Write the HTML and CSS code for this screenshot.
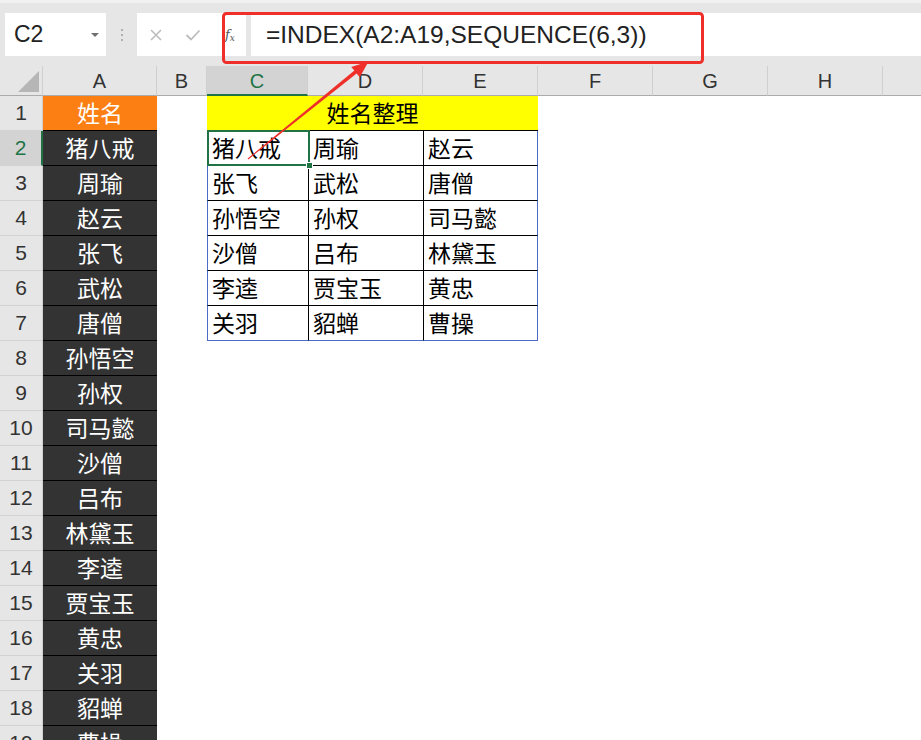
FILE: index.html
```html
<!DOCTYPE html>
<html lang="zh-CN">
<head>
<meta charset="utf-8">
<title>INDEX SEQUENCE</title>
<link rel="stylesheet" href="styles.css">
</head>
<body>
<div class="app">
  <div class="toolbar">
    <div class="namebox"><span class="ref">C2</span><span class="caret"></span></div>
    <div class="dots"><i></i><i></i><i></i></div>
    <div class="fxbox">
      <svg class="ico" width="14" height="14" viewBox="0 0 14 14"><path d="M2 2 L12 12 M12 2 L2 12" stroke="#bdbdbd" stroke-width="1.6" fill="none"/></svg>
      <svg class="ico" width="16" height="14" viewBox="0 0 16 14"><path d="M1.5 7 L6 11.5 L14.5 2.5" stroke="#bdbdbd" stroke-width="1.8" fill="none"/></svg>
      <span class="fx">f<sub>x</sub></span>
    </div>
    <div class="formula">=INDEX(A2:A19,SEQUENCE(6,3))</div>
  </div>

  <div class="sheet">
    <div class="colhead">
      <div class="corner"><span class="tri"></span></div>
      <div class="ch">A</div>
      <div class="ch">B</div>
      <div class="ch sel">C</div>
      <div class="ch">D</div>
      <div class="ch">E</div>
      <div class="ch">F</div>
      <div class="ch">G</div>
      <div class="ch">H</div>
      <div class="ch last"></div>
    </div>

    <div class="row">
      <div class="rh">1</div><div class="a head">姓名</div><div class="b"></div>
      <div class="title">姓名整理</div>
    </div>
    <div class="row">
      <div class="rh sel">2</div><div class="a">猪八戒</div><div class="b"></div>
      <div class="d c1 active">猪八戒</div><div class="d c2">周瑜</div><div class="d c3">赵云</div>
    </div>
    <div class="row">
      <div class="rh">3</div><div class="a">周瑜</div><div class="b"></div>
      <div class="d c1">张飞</div><div class="d c2">武松</div><div class="d c3">唐僧</div>
    </div>
    <div class="row">
      <div class="rh">4</div><div class="a">赵云</div><div class="b"></div>
      <div class="d c1">孙悟空</div><div class="d c2">孙权</div><div class="d c3">司马懿</div>
    </div>
    <div class="row">
      <div class="rh">5</div><div class="a">张飞</div><div class="b"></div>
      <div class="d c1">沙僧</div><div class="d c2">吕布</div><div class="d c3">林黛玉</div>
    </div>
    <div class="row">
      <div class="rh">6</div><div class="a">武松</div><div class="b"></div>
      <div class="d c1">李逵</div><div class="d c2">贾宝玉</div><div class="d c3">黄忠</div>
    </div>
    <div class="row">
      <div class="rh">7</div><div class="a">唐僧</div><div class="b"></div>
      <div class="d c1 lastrow">关羽</div><div class="d c2 lastrow">貂蝉</div><div class="d c3 lastrow">曹操</div>
    </div>
    <div class="row"><div class="rh">8</div><div class="a">孙悟空</div></div>
    <div class="row"><div class="rh">9</div><div class="a">孙权</div></div>
    <div class="row"><div class="rh">10</div><div class="a">司马懿</div></div>
    <div class="row"><div class="rh">11</div><div class="a">沙僧</div></div>
    <div class="row"><div class="rh">12</div><div class="a">吕布</div></div>
    <div class="row"><div class="rh">13</div><div class="a">林黛玉</div></div>
    <div class="row"><div class="rh">14</div><div class="a">李逵</div></div>
    <div class="row"><div class="rh">15</div><div class="a">贾宝玉</div></div>
    <div class="row"><div class="rh">16</div><div class="a">黄忠</div></div>
    <div class="row"><div class="rh">17</div><div class="a">关羽</div></div>
    <div class="row"><div class="rh">18</div><div class="a">貂蝉</div></div>
    <div class="row"><div class="rh">19</div><div class="a">曹操</div></div>
  </div>

  <svg class="annot" width="921" height="740" viewBox="0 0 921 740">
    <rect x="223.5" y="13.5" width="479" height="49" rx="3" ry="3" fill="none" stroke="#ee2f2a" stroke-width="3"/>
    <polygon fill="#ee2f2a" points="247.6,158.6 354.4,70.6 351.2,67.0 368.5,61.5 359.8,77.2 356.6,73.4 248.3,159.4"/>
  </svg>
</div>
</body>
</html>
```

FILE: styles.css
```css
html, body {
  margin: 0;
  padding: 0;
  width: 921px;
  height: 740px;
  overflow: hidden;
  background: #ffffff;
}

.app {
  position: relative;
  width: 921px;
  height: 740px;
  overflow: hidden;
  font-family: "Liberation Sans", Arial, "Noto Sans CJK SC", sans-serif;
  color: #222;
}

/* ---------- formula bar ---------- */
.toolbar {
  height: 66px;
  box-sizing: border-box;
  background: #e6e6e6;
  border-top: 3px solid #f1f1f1;
  padding-top: 10px;
  display: flex;
  align-items: flex-start;
}

.namebox {
  margin-left: 5px;
  width: 101px;
  height: 43px;
  box-sizing: border-box;
  background: #fff;
  display: flex;
  align-items: center;
  justify-content: space-between;
  padding: 0 7px 0 9px;
}

.ref {
  font-size: 23px;
  color: #222;
}

.caret {
  width: 0;
  height: 0;
  border-left: 4px solid transparent;
  border-right: 4px solid transparent;
  border-top: 4px solid #707070;
}

.dots {
  width: 31px;
  height: 43px;
  display: flex;
  flex-direction: column;
  align-items: center;
  justify-content: center;
  gap: 3px;
}

.dots i {
  display: block;
  width: 2px;
  height: 2px;
  background: #b0b0b0;
}

.fxbox {
  width: 109px;
  height: 43px;
  box-sizing: border-box;
  background: #fff;
  display: flex;
  align-items: center;
  padding-left: 12px;
}

.fxbox .ico:first-child {
  margin-right: 22px;
}

.fxbox .ico:nth-child(2) {
  margin-right: 24px;
}

.fx {
  font-family: "DejaVu Serif", "Liberation Serif", serif;
  font-style: italic;
  font-size: 13px;
  color: #555;
  line-height: 1;
  margin-top: 2px;
}

.fx sub {
  font-size: 9px;
  vertical-align: -2px;
}

.formula {
  flex: 1;
  margin-left: 5px;
  height: 43px;
  background: #fff;
  display: flex;
  align-items: center;
  padding-left: 15px;
  font-size: 24.5px;
  color: #222;
  white-space: nowrap;
}

/* ---------- sheet ---------- */
.sheet {
  display: flex;
  flex-direction: column;
}

.colhead {
  display: grid;
  grid-template-columns: 43px 114px 50px 101px 115px 115px 115px 115px 115px 1fr;
  height: 30px;
  background: #e6e6e6;
}

.corner {
  box-sizing: border-box;
  border-right: 1px solid #cfcfcf;
  border-bottom: 1px solid #ababab;
  display: flex;
  justify-content: flex-end;
  align-items: flex-end;
  padding: 0 3px 3px 0;
}

.tri {
  width: 0;
  height: 0;
  border-left: 21px solid transparent;
  border-bottom: 21px solid #b6b6b6;
}

.ch {
  box-sizing: border-box;
  border-right: 1px solid #cfcfcf;
  border-bottom: 1px solid #ababab;
  display: flex;
  align-items: center;
  justify-content: center;
  font-size: 20px;
  color: #333;
  padding-top: 2px;
}

.ch.sel {
  background: #d3d3d3;
  color: #217346;
  border-bottom: 2px solid #217346;
  padding-top: 3px;
}

.ch.last {
  border-right: none;
}

.row {
  display: grid;
  grid-template-columns: 43px 114px 50px 101px 115px 115px 1fr;
  height: 35px;
  font-family: "Noto Sans CJK SC", "Liberation Sans", sans-serif;
  font-size: 23px;
}

.rh {
  box-sizing: border-box;
  background: #e6e6e6;
  border-right: 1px solid #cfcfcf;
  border-bottom: 1px solid #d3d3d3;
  display: flex;
  align-items: center;
  justify-content: center;
  font-family: "Liberation Sans", Arial, sans-serif;
  font-size: 21px;
  color: #333;
}

.rh.sel {
  background: #d3d3d3;
  color: #217346;
  border-right: 2px solid #217346;
}

.a {
  box-sizing: border-box;
  background: #333333;
  color: #ffffff;
  border-bottom: 1px solid #000;
  display: flex;
  align-items: center;
  justify-content: center;
  line-height: 1;
  padding-bottom: 2px;
}

.a.head {
  background: #fc7f14;
}

.title {
  grid-column: span 3;
  box-sizing: border-box;
  background: #ffff00;
  border-bottom: 1px solid #000;
  display: flex;
  align-items: center;
  justify-content: center;
  color: #000;
  line-height: 1;
  padding-bottom: 2px;
}

.d {
  box-sizing: border-box;
  border-bottom: 1px solid #000;
  display: flex;
  align-items: center;
  padding-left: 4px;
  padding-bottom: 2px;
  color: #000;
  line-height: 1;
}

.d.c1 {
  border-left: 1px solid #4c6bc4;
}

.d.c2,
.d.c3 {
  border-left: 1px solid #000;
}

.d.c3 {
  border-right: 1px solid #4c6bc4;
}

.d.lastrow {
  border-bottom: 1px solid #4c6bc4;
}

.d.active {
  position: relative;
  z-index: 2;
}

.d.active::after {
  content: "";
  position: absolute;
  left: -1px;
  top: -1px;
  right: -2px;
  bottom: -1px;
  border: 2px solid #217346;
}

.d.active::before {
  content: "";
  position: absolute;
  right: -5px;
  bottom: -4px;
  width: 5px;
  height: 5px;
  background: #217346;
  border: 1px solid #fff;
  z-index: 3;
}

/* ---------- annotation overlay ---------- */
.annot {
  position: absolute;
  left: 0;
  top: 0;
  pointer-events: none;
  z-index: 5;
}
```
